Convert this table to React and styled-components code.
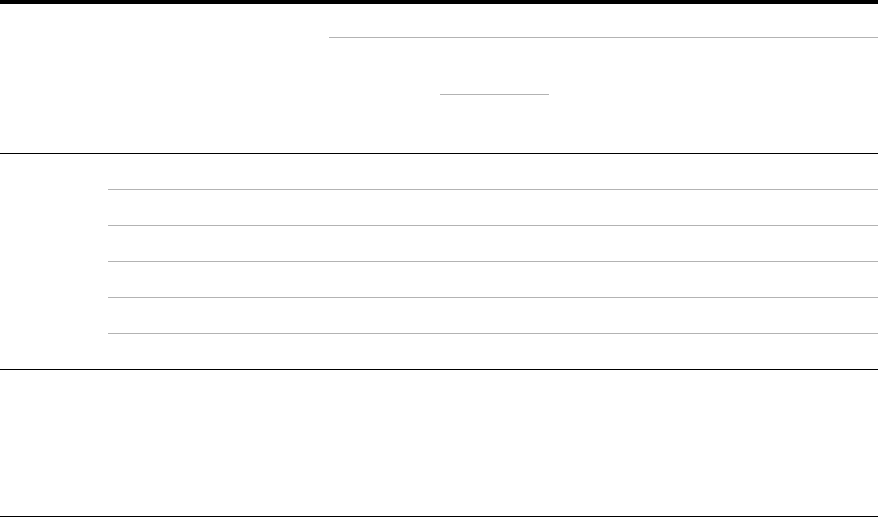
import React from "react";
import styled, { createGlobalStyle } from "styled-components";

const Global = createGlobalStyle`
  html, body { margin: 0; padding: 0; background: #fff; }
  body { font-family: "Liberation Sans", Arial, sans-serif; }
  #root { width: 878px; height: 517px; overflow: hidden; }
`;

const Page = styled.div`
  display: flex;
  flex-direction: column;
  width: 878px;
`;

const TopBar = styled.div`
  height: 4px;
  background: #000;
`;

const Hero = styled.section`
  height: 150px;
  display: flex;
  flex-direction: column;
  padding-top: 33px;
  box-sizing: border-box;
  border-bottom: 1px solid #000;
`;

const Field = styled.div`
  margin-left: 329px;
  height: 0;
  border-top: 1px solid #b3b3b3;
`;

const ButtonLine = styled.div`
  margin-left: 440px;
  margin-top: 56px;
  width: 109px;
  border-top: 1px solid #b3b3b3;
`;

const Table = styled.section`
  display: grid;
  grid-template-columns: 108px 1fr;
  border-bottom: 1px solid #000;
`;

const Row = styled.div`
  grid-column: 2;
  height: 35px;
  border-top: ${(p) => (p.$first ? "0" : "1px solid #b3b3b3")};
`;

const Footer = styled.section`
  height: 146px;
  border-bottom: 1px solid #000;
`;

export default function App() {
  const rows = [0, 1, 2, 3, 4, 5];
  return (
    <>
      <Global />
      <Page>
        <TopBar />
        <Hero>
          <Field />
          <ButtonLine />
        </Hero>
        <Table>
          {rows.map((r) => (
            <Row key={r} $first={r === 0} />
          ))}
        </Table>
        <Footer />
      </Page>
    </>
  );
}
